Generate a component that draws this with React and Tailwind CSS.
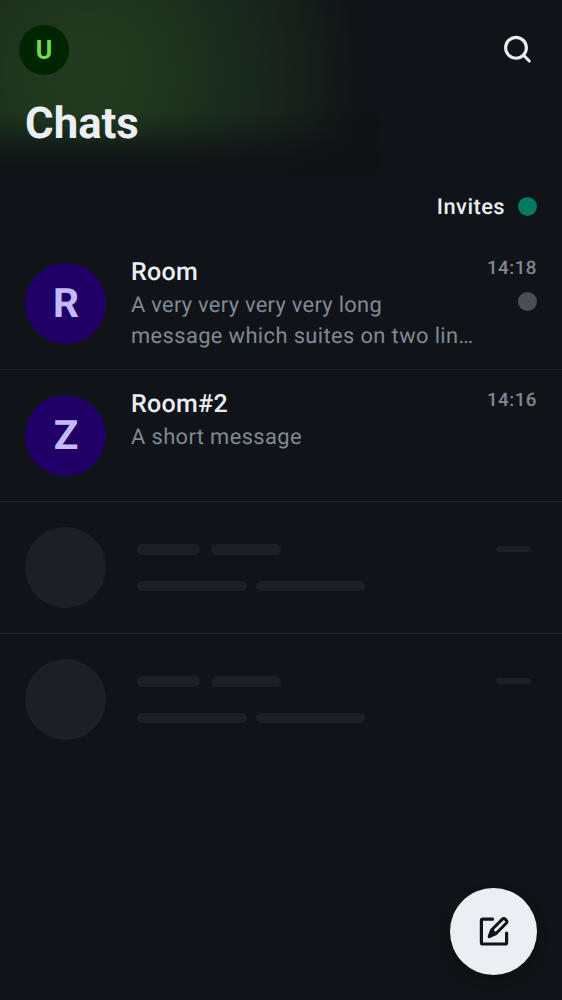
const rooms = [
  { initial: "R", name: "Room", message: ["A very very very very long", "message which suites on two lin…"], time: "14:18", unread: true },
  { initial: "Z", name: "Room#2", message: ["A short message"], time: "14:16", unread: false },
];

function RoomRow({ room }) {
  return (
    <li className="flex h-[132px] border-b border-[#22252a] pl-[25px] pr-[25px] first:border-[#1b1e23]">
      <div className="mt-[25px] flex size-[81px] shrink-0 items-center justify-center rounded-full bg-[#200066] pb-px pl-px text-[40.6px] font-bold leading-none text-[#c5baff]">
        {room.initial}
      </div>
      <div className="ml-[25px] mt-[17px] w-[350px] shrink-0">
        <h2 className="text-[25px] font-medium leading-[36px] tracking-[0.3px] text-[#ebeef2]">{room.name}</h2>
        <p className="-mt-px whitespace-nowrap text-[21.875px] leading-[31.25px] tracking-[0.39px] text-[#808994]">
          {room.message.map((line, index) => (
            <span key={line} className={room.message.length > 1 && index === 0 ? "block tracking-[0.29px]" : "block"}>{line}</span>
          ))}
        </p>
      </div>
      <div className="ml-auto mt-[18px] flex flex-col items-end">
        <time className="text-[18.75px] font-medium leading-[25px] tracking-[0.5px] text-[#808994]">{room.time}</time>
        {room.unread && <span className="mt-[11px] size-[19px] rounded-full bg-[#4b4e54]" />}
      </div>
    </li>
  );
}

function PlaceholderRow({ last }) {
  return (
    <li className={last ? "flex h-[132px] px-[25px]" : "flex h-[132px] border-b border-[#22252a] px-[25px]"}>
      <div className="mt-[25px] size-[81px] shrink-0 rounded-full bg-[#1d1f24]" />
      <div className="ml-[31px] mt-[42px]">
        <div className="flex gap-[11px]">
          <div className="h-[11px] w-[63px] rounded-full bg-[#1d1f24]" />
          <div className="h-[11px] w-[70px] rounded-full bg-[#1d1f24]" />
        </div>
        <div className="mt-[26px] flex gap-[9px]">
          <div className="h-[10px] w-[110px] rounded-full bg-[#1d1f24]" />
          <div className="h-[10px] w-[109px] rounded-full bg-[#1d1f24]" />
        </div>
      </div>
      <div className="ml-auto mr-[6px] mt-[44px] h-[6px] w-[35px] rounded-full bg-[#1d1f24]" />
    </li>
  );
}

export default function App() {
  return (
    <div className="relative isolate h-[1000px] w-[562px] overflow-hidden bg-[#101317] font-['Roboto',sans-serif] [text-rendering:geometricPrecision]">
      <div className="absolute left-0 top-0 -z-10 h-[175px] w-[380px] bg-[radial-gradient(circle_at_88px_72px,#223b1f_0px,#20381e_55px,#1d321d_95px,#1b2d1d_130px,#19261c_175px,#151d19_225px,#101317_275px)] [mask-image:linear-gradient(to_bottom,black_112px,rgba(0,0,0,0.75)_128px,rgba(0,0,0,0.35)_145px,rgba(0,0,0,0.1)_160px,transparent_174px)]" />
      <header className="h-[175px] pt-[25px]">
        <div className="flex h-[50px] items-center justify-between pl-[19px] pr-[30px]">
          <button aria-label="Profile" className="flex size-[50px] items-center justify-center rounded-full bg-[#002600] text-[25px] font-bold leading-none text-[#76db4c]">
            U
          </button>
          <button aria-label="Search" className="size-[30px]">
            <svg viewBox="0 0 30 30" className="size-[30px]" fill="none" stroke="#ebeef2" strokeWidth="3.1" strokeLinecap="round">
              <circle cx="14" cy="12.8" r="10.4" />
              <path d="M21.8 20.5 27.3 26" />
            </svg>
          </button>
        </div>
        <h1 className="mt-[22.5px] pl-[25px] text-[43.75px] font-bold leading-[50px] text-[#ebeef2]">Chats</h1>
      </header>
      <div className="flex h-[63px] items-center justify-end gap-[13px] pr-[25px]">
        <span className="pt-px text-[21.875px] font-medium leading-[31px] tracking-[0.45px] text-[#ebeef2]">Invites</span>
        <span className="size-[19px] rounded-full bg-[#007a61]" />
      </div>
      <ul>
        {rooms.map((room) => <RoomRow key={room.name} room={room} />)}
        <PlaceholderRow />
        <PlaceholderRow last />
      </ul>
      <button aria-label="New chat" className="absolute bottom-[25px] right-[25px] flex size-[87.5px] items-center justify-center rounded-full bg-[#ebeef2] shadow-[0_5px_12px_rgba(0,0,0,0.22)]">
        <svg viewBox="0 0 30 30" className="mb-px ml-px size-[30px]" fill="none" stroke="#101317" strokeWidth="3.2" strokeLinecap="round" strokeLinejoin="round">
          <path d="M13.6 3.2H4Q2.4 3.2 2.4 4.8V26.4Q2.4 28 4 28H26Q27.6 28 27.6 26.4V17.2" />
          <path d="M10.2 20.6 12.8 13.8 23.2 3.4Q24.8 1.8 26.4 3.4L27.2 4.2Q28.7 5.7 27.2 7.3L16.8 17.7Z" strokeWidth="3" />
          <path d="M10.2 20.6 12.8 13.8 16.8 17.7Z" fill="#101317" strokeWidth="2.4" />
        </svg>
      </button>
    </div>
  );
}
